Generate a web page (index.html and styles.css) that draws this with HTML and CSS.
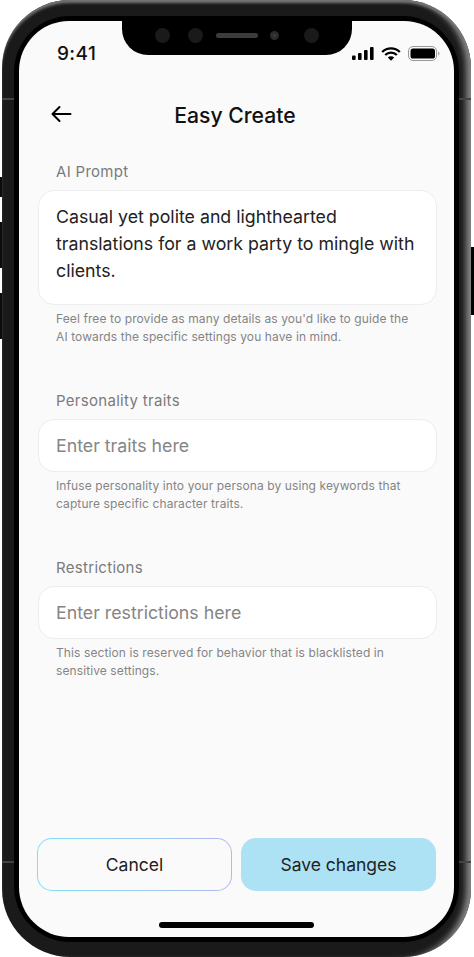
FILE: index.html
```html
<!DOCTYPE html>
<html lang="en">
<head>
<meta charset="utf-8">
<title>Easy Create</title>
<link rel="stylesheet" href="styles.css">
</head>
<body>
<div class="device">
  <span class="side-btn side-mute"></span>
  <span class="side-btn side-up"></span>
  <span class="side-btn side-down"></span>
  <span class="side-btn side-power"></span>
  <span class="seam seam-tl"></span>
  <span class="seam seam-tr"></span>
  <span class="seam seam-bl"></span>
  <span class="seam seam-br"></span>
  <div class="bezel">
    <div class="notch">
      <span class="sensor"></span>
      <span class="sensor"></span>
      <span class="speaker"></span>
      <span class="camera"></span>
      <span class="sensor sensor-last"></span>
    </div>
    <main class="screen">
      <div class="status">
        <span class="time">9:41</span>
        <div class="status-icons">
          <svg width="22" height="13" viewBox="0 0 22 13"><rect x="0" y="8.500" width="3.600" height="4.500" rx="1"/><rect x="6" y="6" width="3.600" height="7" rx="1"/><rect x="12" y="3" width="3.600" height="10" rx="1"/><rect x="18" y="0" width="3.600" height="13" rx="1"/></svg>
          <svg width="20" height="14" viewBox="0 0 20 14"><path d="M1.200 5a12.500 12.500 0 0 1 17.600 0M4.200 8a8.200 8.200 0 0 1 11.600 0" fill="none" stroke="#000" stroke-width="2.300"/><path d="M6.800 10.500a4.500 4.500 0 0 1 6.400 0L10 13.800z"/></svg>
          <svg width="32" height="15" viewBox="0 0 32 15"><rect x=".5" y=".5" width="28" height="14" rx="4.500" fill="none" stroke="#999"/><rect x="2.500" y="2.500" width="24.500" height="10" rx="2.600"/><path d="M30 5.500v4c.8-.3 1.500-1.100 1.500-2s-.7-1.700-1.500-2z" fill="#aaa"/></svg>
        </div>
      </div>
      <header class="topbar">
        <button class="back" aria-label="Back">
          <svg width="24" height="24" viewBox="0 0 24 24" fill="none" stroke="#000" stroke-width="2" stroke-linecap="round" stroke-linejoin="round"><path d="M3.500 12h18M10.500 5l-7 7 7 7"/></svg>
        </button>
        <h1 class="title">Easy Create</h1>
      </header>
      <form class="form">
        <section class="field">
          <label class="label">AI Prompt</label>
          <div class="box box-tall">Casual yet polite and lighthearted translations for a work party to mingle with clients.</div>
          <p class="help">Feel free to provide as many details as you'd like to guide the AI towards the specific settings you have in mind.</p>
        </section>
        <section class="field">
          <label class="label">Personality traits</label>
          <div class="box box-empty">Enter traits here</div>
          <p class="help">Infuse personality into your persona by using keywords that capture specific character traits.</p>
        </section>
        <section class="field">
          <label class="label">Restrictions</label>
          <div class="box box-empty">Enter restrictions here</div>
          <p class="help">This section is reserved for behavior that is blacklisted in sensitive settings.</p>
        </section>
      </form>
      <div class="actions">
        <button class="btn btn-ghost" type="button">Cancel</button>
        <button class="btn btn-solid" type="button">Save changes</button>
      </div>
      <div class="home-row"><span class="home"></span></div>
    </main>
  </div>
</div>
</body>
</html>
```
FILE: styles.css
```css
* { box-sizing: border-box; }
html, body { margin: 0; padding: 0; background: #fff; }
body { font-family: Inter, "Liberation Sans", sans-serif; height: 957px; overflow: hidden; }

.device {
  position: relative;
  width: 469px;
  height: 957px;
  margin-left: 2px;
  padding: 16px 12px 15px 12px;
  border-radius: 68px;
  background: #1a1a1a;
  box-shadow: inset 0 4px 3px -1px #777, inset -9px 0 6px -4px #8a8a8a;
}
.side-btn { position: absolute; background: #0c0c0c; }
.side-mute { left: -2px; top: 177px; width: 2px; height: 20px; }
.side-up { left: -2px; top: 222px; width: 2px; height: 46px; }
.side-down { left: -2px; top: 293px; width: 2px; height: 46px; }
.side-power { right: -3px; top: 247px; width: 3px; height: 68px; background: #000; }
.seam { position: absolute; width: 12px; height: 2px; background: #444; }
.seam-tl { left: 0; top: 98px; }
.seam-tr { right: 0; top: 98px; }
.seam-bl { left: 0; top: 861px; }
.seam-br { right: 0; top: 861px; }

.bezel {
  position: relative;
  height: 926px;
  padding: 5px;
  border-radius: 56px;
  background: #000;
}
.screen {
  display: flex;
  flex-direction: column;
  height: 916px;
  border-radius: 50px;
  background: #fafafa;
  overflow: hidden;
}
.notch {
  position: absolute;
  left: 108px;
  top: 0;
  width: 230px;
  height: 39px;
  display: flex;
  align-items: center;
  padding: 0 33px;
  background: #000;
  border-radius: 0 0 26px 26px;
}
.sensor { width: 15px; height: 15px; border-radius: 50%; background: #1a1a1a; margin-right: 18px; }
.speaker { width: 42px; height: 5px; border-radius: 3px; background: #3c3c3c; margin: 0 12px 0 -5px; }
.camera { width: 9px; height: 9px; border-radius: 50%; background: #333; border: 3px solid #2c2c2c; box-shadow: inset 0 0 0 1px #444; }
.sensor-last { margin: 0 0 0 auto; }

.status { display: flex; justify-content: space-between; align-items: center; height: 33px; padding: 0 14px 0 38px; margin-top: 16px; flex: none; }
.time { font-size: 19px; font-weight: 500; letter-spacing: .4px; color: #111; }
.status-icons { display: flex; align-items: center; gap: 7px; }
.status-icons svg { display: block; }

.topbar { position: relative; display: flex; justify-content: center; align-items: center; height: 34px; margin-top: 28px; padding-right: 3px; flex: none; }
.back { position: absolute; left: 30px; top: 4px; width: 24px; height: 24px; padding: 0; border: 0; background: none; }
.back svg { display: block; }
.title { margin: 0; font-size: 21.200px; line-height: 34px; font-weight: 500; color: #111; }

.form { display: flex; flex-direction: column; gap: 46px; padding: 0 17px 0 19px; margin-top: 31px; flex: none; }
.field { display: flex; flex-direction: column; }
.label { padding-left: 18px; font-size: 15px; line-height: 18px; font-weight: 400; letter-spacing: .3px; color: #7b7b7b; margin-bottom: 9px; }
.box { border: 1px solid #ededed; background: #fff; border-radius: 16px; padding: 12px 17px 14px; font-size: 17.750px; line-height: 27px; color: #222; }
.box-tall { height: 115px; }
.box-empty { height: 53px; color: #858585; }
.help { margin: 5px 0 0; padding: 0 18px; font-size: 12px; line-height: 18px; letter-spacing: .1px; color: #858585; }

.actions { display: flex; gap: 9px; padding: 0 18px; margin-top: auto; flex: none; }
.btn { flex: 1 1 195px; height: 53px; padding: 0; border-radius: 15px; font: 400 17.500px Inter, "Liberation Sans", sans-serif; color: #222; }
.btn-ghost { border: 1px solid transparent; background: linear-gradient(#fafafa, #fafafa) padding-box, linear-gradient(90deg, #7fe0f0, #b4b8f0) border-box; }
.btn-solid { border: 0; background: #ade1f4; }
.home-row { display: flex; justify-content: center; height: 46px; padding-top: 31px; flex: none; }
.home { width: 155px; height: 6px; border-radius: 3px; background: #000; }
```
